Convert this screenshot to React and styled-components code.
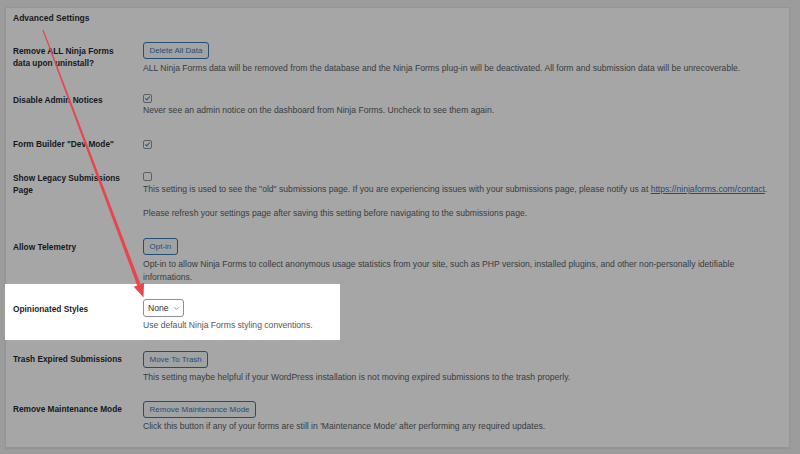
import React from "react";
import styled, { createGlobalStyle } from "styled-components";
import { ChevronDown } from "lucide-react";

const GlobalStyle = createGlobalStyle`
  html, body {
    margin: 0;
    background: #9c9c9d;
  }
  body {
    font-family: "Liberation Sans", Arial, sans-serif;
    font-size: 8.6px;
  }
`;

const Page = styled.div`
  position: relative;
  box-sizing: border-box;
  height: 454px;
  padding: 7px 10px 0 5px;
  overflow: hidden;
`;

const Card = styled.div`
  background: #a6a6a6;
  border: 1px solid #959596;
  padding-top: 4px;
  box-shadow: 0 1px 1px rgba(0, 0, 0, 0.05);
`;

const Title = styled.h2`
  margin: 0;
  padding-left: 7px;
  font-size: 8.5px;
  font-weight: bold;
  line-height: 12px;
  color: #16191c;
`;

const Row = styled.div`
  display: grid;
  grid-template-columns: 130px 1fr;
  box-sizing: border-box;
  padding: ${(p) => p.$pt}px 10px ${(p) => p.$pb || 0}px 7px;
  width: ${(p) => (p.$lit ? "335px" : "auto")};
  margin-left: ${(p) => (p.$lit ? "-1px" : "0")};
  padding-left: ${(p) => (p.$lit ? "8px" : "7px")};
  background: ${(p) => (p.$lit ? "#ffffff" : "transparent")};
`;

const Label = styled.div`
  margin-top: ${(p) => p.$offset || 0}px;
  font-size: 8.3px;
  font-weight: bold;
  line-height: 12px;
  color: ${(p) => (p.$lit ? "#1d2327" : "#15181b")};
`;

const Field = styled.div`
  display: flex;
  flex-direction: column;
  align-items: flex-start;
  min-width: 0;
`;

const Button = styled.button`
  box-sizing: border-box;
  height: 17px;
  padding: 0 5.5px;
  border: 1px solid #234f77;
  border-radius: 3px;
  background: #a1a2a2;
  color: #1f4f7c;
  font-family: inherit;
  font-size: 8px;
  line-height: 15px;
  cursor: pointer;
`;

const Check = styled.span`
  box-sizing: border-box;
  display: block;
  width: 9px;
  height: 9px;
  border: 1px solid #5d5f62;
  border-radius: 2px;
  background: #a6a6a6;

  svg {
    display: block;
    width: 100%;
    height: 100%;
  }
`;

const Select = styled.div`
  box-sizing: border-box;
  display: flex;
  align-items: center;
  gap: 4px;
  height: 18px;
  padding: 0 3px 0 4px;
  border: 1px solid #8c8f94;
  border-radius: 3px;
  background: #fff;
  color: #2c3338;
`;

const Desc = styled.p`
  margin: ${(p) => (p.$gap != null ? p.$gap : 2.5)}px 0 0;
  line-height: 13px;
  color: ${(p) => (p.$lit ? "#50575e" : "#383c41")};
`;

const Link = styled.a`
  color: #1d4d7a;
  text-decoration: underline;
`;

const Arrow = styled.svg`
  position: absolute;
  left: 0;
  top: 0;
  width: 800px;
  height: 454px;
  pointer-events: none;
`;

function Checkbox({ checked }) {
  return (
    <Check>
      {checked && (
        <svg viewBox="0 0 9 9">
          <path
            d="M1.8 4.5 L3.6 6.3 L7.2 2.2"
            fill="none"
            stroke="#22557f"
            strokeWidth="1.3"
            strokeLinecap="round"
            strokeLinejoin="round"
          />
        </svg>
      )}
    </Check>
  );
}

export default function App() {
  return (
    <>
      <GlobalStyle />
      <Page>
        <Card>
          <Title>Advanced Settings</Title>

          <Row $pt={18}>
            <Label $offset={2.5}>
              Remove ALL Ninja Forms
              <br />
              data upon uninstall?
            </Label>
            <Field>
              <Button>Delete All Data</Button>
              <Desc>
                ALL Ninja Forms data will be removed from the database and the Ninja Forms plug-in will be
                deactivated. All form and submission data will be unrecoverable.
              </Desc>
            </Field>
          </Row>

          <Row $pt={19}>
            <Label>Disable Admin Notices</Label>
            <Field>
              <Checkbox checked />
              <Desc $gap={1.5}>
                Never see an admin notice on the dashboard from Ninja Forms. Uncheck to see them again.
              </Desc>
            </Field>
          </Row>

          <Row $pt={23}>
            <Label $offset={-2}>Form Builder "Dev Mode"</Label>
            <Field>
              <Checkbox checked />
            </Field>
          </Row>

          <Row $pt={22}>
            <Label>
              Show Legacy Submissions
              <br />
              Page
            </Label>
            <Field>
              <Checkbox />
              <Desc $gap={2}>
                This setting is used to see the "old" submissions page. If you are experiencing issues with your
                submissions page, please notify us at <Link>https://ninjaforms.com/contact</Link>.
              </Desc>
              <Desc $gap={11.3}>
                Please refresh your settings page after saving this setting before navigating to the submissions
                page.
              </Desc>
            </Field>
          </Row>

          <Row $pt={18}>
            <Label $offset={2.5}>Allow Telemetry</Label>
            <Field>
              <Button>Opt-in</Button>
              <Desc>
                Opt-in to allow Ninja Forms to collect anonymous usage statistics from your site, such as PHP
                version, installed plugins, and other non-personally idetifiable informations.
              </Desc>
            </Field>
          </Row>

          <Row $lit $pt={15.5} $pb={8}>
            <Label $lit $offset={4}>
              Opinionated Styles
            </Label>
            <Field>
              <Select>
                None
                <ChevronDown size={7} strokeWidth={2.2} color="#50575e" />
              </Select>
              <Desc $lit $gap={2.2}>
                Use default Ninja Forms styling conventions.
              </Desc>
            </Field>
          </Row>

          <Row $pt={11}>
            <Label $offset={2}>Trash Expired Submissions</Label>
            <Field>
              <Button>Move To Trash</Button>
              <Desc>
                This setting maybe helpful if your WordPress installation is not moving expired submissions to the
                trash properly.
              </Desc>
            </Field>
          </Row>

          <Row $pt={17} $pb={14}>
            <Label $offset={2.5}>Remove Maintenance Mode</Label>
            <Field>
              <Button>Remove Maintenance Mode</Button>
              <Desc>
                Click this button if any of your forms are still in 'Maintenance Mode' after performing any
                required updates.
              </Desc>
            </Field>
          </Row>
        </Card>

        <Arrow viewBox="0 0 800 454">
          <polygon points="43.56,29.79 140.59,284.17 137.21,285.43 42.44,30.21" fill="#e8464c" />
          <polygon points="143.5,297.5 144.05,282.87 133.75,286.73" fill="#e8464c" />
        </Arrow>
      </Page>
    </>
  );
}
